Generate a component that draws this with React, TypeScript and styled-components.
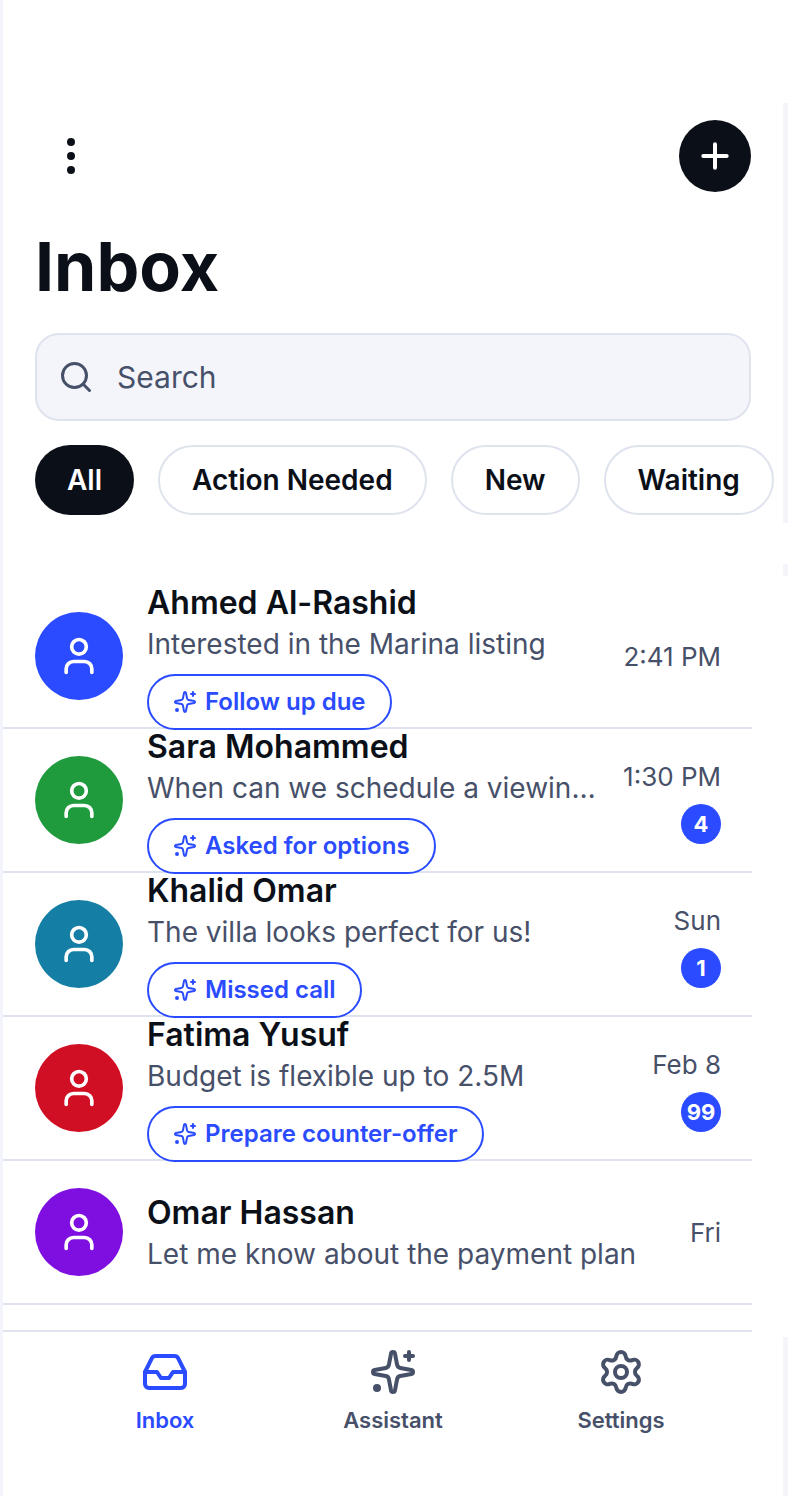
import React from "react";
import styled, { createGlobalStyle } from "styled-components";
import { EllipsisVertical, Inbox as InboxIcon, Plus, Search, Settings, User } from "lucide-react";

const Global = createGlobalStyle`
  html, body { margin: 0; padding: 0; background: #fff; }
  * { box-sizing: border-box; }
  body { font-family: Inter, "Liberation Sans", sans-serif; color: #0b1018; }
`;

const Page = styled.div`
  position: relative;
  width: 788px;
  height: 1496px;
  overflow: hidden;
  background: #fff;
  border-left: 3px solid #f4f5fc;
`;

const EdgeStrip = styled.div<{ $top: number; $height: number }>`
  position: absolute;
  right: 0;
  top: ${(p) => p.$top}px;
  width: 5px;
  height: ${(p) => p.$height}px;
  background: #f4f4fb;
`;

const Header = styled.header`
  width: 780px;
  padding: 120px 32px 0;
`;

const TopBar = styled.div`
  display: flex;
  justify-content: space-between;
  align-items: center;
`;

const MenuButton = styled.div`
  width: 72px;
  height: 72px;
  display: flex;
  align-items: center;
  justify-content: center;
  color: #0b1018;
`;

const AddButton = styled(MenuButton)`
  border-radius: 50%;
  background: #0b1018;
  color: #fff;
`;

const Title = styled.h1`
  margin: 32px 0 0;
  font-size: 68px;
  line-height: 84px;
  font-weight: 700;
  color: #0b1018;
`;

const SearchBox = styled.div`
  margin-top: 25px;
  height: 88px;
  display: flex;
  align-items: center;
  gap: 23px;
  padding: 0 21px;
  border: 2px solid #dfe3ee;
  border-radius: 24px;
  background: #f4f5fb;
  color: #475069;
`;

const SearchText = styled.span`
  font-size: 30px;
  line-height: 36px;
`;

const Filters = styled.div`
  display: flex;
  gap: 24px;
  margin-top: 24px;
  width: 760px;
`;

const Pill = styled.div<{ $active?: boolean }>`
  flex: none;
  height: 70px;
  padding: 0 32px;
  display: flex;
  align-items: center;
  border-radius: 35px;
  border: ${(p) => (p.$active ? "none" : "2px solid #dfe3ee")};
  background: ${(p) => (p.$active ? "#0b1018" : "#fff")};
  color: ${(p) => (p.$active ? "#fff" : "#0b1018")};
  font-size: 28px;
  font-weight: 600;
`;

const List = styled.div`
  width: 749px;
  margin-top: 70px;
`;

const Row = styled.div`
  height: 144px;
  padding: 0 31px 0 32px;
  display: flex;
  align-items: center;
  gap: 24px;
  border-bottom: 2px solid #dfe3ee;
`;

const Avatar = styled.div<{ $color: string }>`
  flex: none;
  width: 88px;
  height: 88px;
  border-radius: 50%;
  background: ${(p) => p.$color};
  color: #fff;
  display: flex;
  align-items: center;
  justify-content: center;
`;

const Body = styled.div<{ $plain?: boolean }>`
  flex: 1;
  min-width: 0;
  padding-top: ${(p) => (p.$plain ? "2px" : "0")};
  display: flex;
  flex-direction: column;
  align-items: flex-start;
`;

const Name = styled.div`
  font-size: 32px;
  line-height: 42px;
  font-weight: 600;
  color: #0b1018;
`;

const Preview = styled.div`
  width: 100%;
  font-size: 28px;
  line-height: 40px;
  color: #475069;
  white-space: nowrap;
  overflow: hidden;
  text-overflow: ellipsis;
`;

const Chip = styled.div`
  margin-top: 10px;
  height: 56px;
  padding: 0 24px;
  display: inline-flex;
  align-items: center;
  gap: 8px;
  border: 2px solid #2a4bff;
  border-radius: 28px;
  background: #fff;
  color: #2a4bff;
  font-size: 24px;
  font-weight: 600;
  white-space: nowrap;
`;

const ChipLabel = styled.span`
  margin-bottom: 2px;
`;

const Meta = styled.div<{ $hasBadge?: boolean }>`
  flex: none;
  padding-top: ${(p) => (p.$hasBadge ? "3px" : "2px")};
  display: flex;
  flex-direction: column;
  align-items: flex-end;
  gap: 9px;
`;

const Time = styled.div`
  font-size: 26px;
  line-height: 36px;
  color: #475069;
  white-space: nowrap;
`;

const Badge = styled.div`
  width: 40px;
  height: 40px;
  border-radius: 50%;
  background: #2a4bff;
  color: #fff;
  font-size: 22px;
  font-weight: 700;
  display: flex;
  align-items: center;
  justify-content: center;
`;

const TabBar = styled.nav`
  width: 749px;
  margin-top: 25px;
  padding: 16px 17px 0 48px;
  display: grid;
  grid-template-columns: repeat(3, 228px);
  border-top: 2px solid #dfe3ee;
`;

const Tab = styled.div<{ $active?: boolean }>`
  display: flex;
  flex-direction: column;
  align-items: center;
  gap: 10px;
  color: ${(p) => (p.$active ? "#2a4bff" : "#475069")};
  font-size: 22px;
  line-height: 28px;
  font-weight: 600;
`;

function SparkleIcon({ size }: { size: number }) {
  return (
    <svg width={size} height={size} viewBox="0 0 24 24" fill="none" stroke="currentColor" strokeWidth={2} strokeLinecap="round" strokeLinejoin="round">
      <path d="M11.017 2.814a1 1 0 0 1 1.966 0l1.051 5.558a2 2 0 0 0 1.594 1.594l5.558 1.051a1 1 0 0 1 0 1.966l-5.558 1.051a2 2 0 0 0-1.594 1.594l-1.051 5.558a1 1 0 0 1-1.966 0l-1.051-5.558a2 2 0 0 0-1.594-1.594l-5.558-1.051a1 1 0 0 1 0-1.966l5.558-1.051a2 2 0 0 0 1.594-1.594z" />
      <path d="M20 2v4" />
      <path d="M22 4h-4" />
      <circle cx="4" cy="20" r="1" fill="currentColor" />
    </svg>
  );
}

const chats = [
  { name: "Ahmed Al-Rashid", text: "Interested in the Marina listing", time: "2:41 PM", color: "#2a4bff", chip: "Follow up due" },
  { name: "Sara Mohammed", text: "When can we schedule a viewing this week?", time: "1:30 PM", color: "#1f9a3c", chip: "Asked for options", badge: "4" },
  { name: "Khalid Omar", text: "The villa looks perfect for us!", time: "Sun", color: "#157ea4", chip: "Missed call", badge: "1" },
  { name: "Fatima Yusuf", text: "Budget is flexible up to 2.5M", time: "Feb 8", color: "#d10f24", chip: "Prepare counter-offer", badge: "99" },
  { name: "Omar Hassan", text: "Let me know about the payment plan", time: "Fri", color: "#7f0fe0" },
];

export default function App() {
  return (
    <Page>
      <Global />
      <EdgeStrip $top={103} $height={420} />
      <EdgeStrip $top={564} $height={12} />
      <EdgeStrip $top={1337} $height={159} />
      <Header>
        <TopBar>
          <MenuButton><EllipsisVertical size={48} strokeWidth={2} /></MenuButton>
          <AddButton><Plus size={40} strokeWidth={2.4} /></AddButton>
        </TopBar>
        <Title>Inbox</Title>
        <SearchBox>
          <Search size={36} strokeWidth={2} />
          <SearchText>Search</SearchText>
        </SearchBox>
        <Filters>
          <Pill $active>All</Pill>
          <Pill>Action Needed</Pill>
          <Pill>New</Pill>
          <Pill>Waiting</Pill>
        </Filters>
      </Header>
      <List>
        {chats.map((c) => (
          <Row key={c.name}>
            <Avatar $color={c.color}><User size={44} strokeWidth={2} /></Avatar>
            <Body $plain={!c.chip}>
              <Name>{c.name}</Name>
              <Preview>{c.text}</Preview>
              {c.chip && (
                <Chip><SparkleIcon size={24} /><ChipLabel>{c.chip}</ChipLabel></Chip>
              )}
            </Body>
            <Meta $hasBadge={!!c.badge}>
              <Time>{c.time}</Time>
              {c.badge && <Badge>{c.badge}</Badge>}
            </Meta>
          </Row>
        ))}
      </List>
      <TabBar>
        <Tab $active><InboxIcon size={48} strokeWidth={2} />Inbox</Tab>
        <Tab><SparkleIcon size={48} />Assistant</Tab>
        <Tab><Settings size={48} strokeWidth={2} />Settings</Tab>
      </TabBar>
    </Page>
  );
}
